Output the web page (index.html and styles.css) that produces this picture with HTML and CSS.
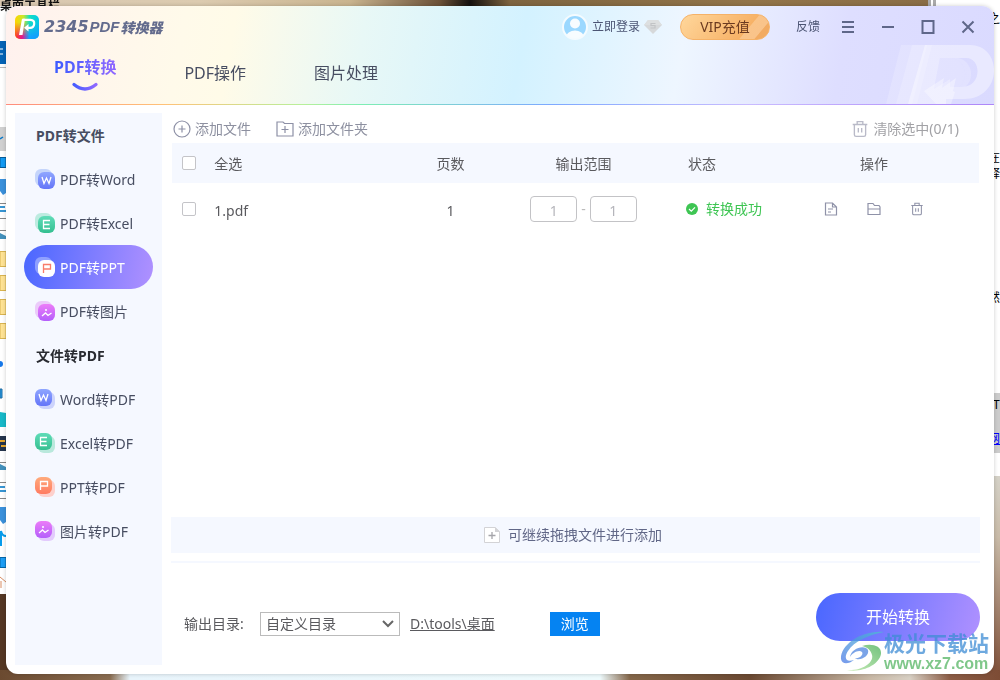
FILE: index.html
```html
<!DOCTYPE html>
<html lang="zh-CN">
<head>
<meta charset="utf-8">
<title>2345PDF转换器</title>
<link rel="stylesheet" href="styles.css">
</head>
<body>
<svg class="defs" width="0" height="0" aria-hidden="true">
  <defs>
    <linearGradient id="gBlue" x1="0" y1="0" x2="0" y2="1"><stop offset="0" stop-color="#8fa6ff"/><stop offset="1" stop-color="#6475f8"/></linearGradient>
    <linearGradient id="gGreen" x1="0" y1="0" x2="0" y2="1"><stop offset="0" stop-color="#5fdcb8"/><stop offset="1" stop-color="#35bf90"/></linearGradient>
    <linearGradient id="gOrange" x1="0" y1="0" x2="0" y2="1"><stop offset="0" stop-color="#ffab7c"/><stop offset="1" stop-color="#ff7b61"/></linearGradient>
    <linearGradient id="gPink" x1="0" y1="0" x2="0" y2="1"><stop offset="0" stop-color="#ec7cf8"/><stop offset="1" stop-color="#b45ffb"/></linearGradient>
    <symbol id="letterW" viewBox="0 0 17 17"><path d="M4 5l2 6.5L8.500 6 11 11.500 13 5" fill="none" stroke="currentColor" stroke-width="1.300"/></symbol>
    <symbol id="letterE" viewBox="0 0 17 17"><path d="M12 4.500H5.500v8H12M5.500 8.500H11.500" fill="none" stroke="currentColor" stroke-width="1.300"/></symbol>
    <symbol id="letterP" viewBox="0 0 17 17"><path d="M5.500 13V4.500H12.500V9H5.500" fill="none" stroke="currentColor" stroke-width="1.300"/></symbol>
    <symbol id="picMark" viewBox="0 0 17 17"><path d="M4 12l3.500-3 2.500 2.500L13.500 9" fill="none" stroke="currentColor" stroke-width="1.300"/><circle cx="8" cy="6" r="1" fill="currentColor"/></symbol>
    <symbol id="trash" viewBox="0 0 16 16"><path d="M1.500 4h13M5.500 4V1.500h5V4M3 4v9q0 1.500 1.500 1.500h7Q13 14.500 13 13V4M6.500 7v4M9.500 7v4" fill="none" stroke="currentColor" stroke-width="1.200"/></symbol>
  </defs>
</svg>

<div class="desktop" aria-hidden="true">
  <div class="sky"></div>
  <div class="left-strip">
    <svg width="6" height="594" viewBox="0 0 6 594">
      <path d="M0 41h6v23H0z" fill="#0563b5"/><path d="M0 49h3M0 54h3" stroke="#fff"/><path d="M0 67.500h6" stroke="#bbb"/>
      <path d="M0 127h6v24H0z" fill="#d0d0d0"/><path d="M0 139l3-2" stroke="#0878c8" stroke-width="1.500"/>
      <path d="M0 157.500h6v10H0z" fill="#149cf4" stroke="#075c98"/>
      <path d="M0 179h6v14l-3 2-3-4zM0 507h6v15l-3 2-3-4z" fill="#3b91db"/>
      <path d="M0 203.500h6M0 218.500h6M0 230.500h6M0 462.500h6M0 482.500h6M0 498.500h6" stroke="#888"/>
      <path d="M0 207h5M0 211h6M0 487h5M0 491h6" stroke="#3895d2" stroke-width="2"/><path d="M0 233l6 3v3H0zM0 464l6 3v3H0z" fill="#4390bb"/>
      <path d="M0 251.500h6v15H0zM0 275.500h6v15H0zM0 299.500h6v15H0zM0 323.500h6v15H0z" fill="#ffe394" stroke="#d9b450"/>
      <circle cx="0" cy="364" r="3" fill="#1677e8"/><path d="M0 389h2v9H0z" fill="#22a0ee" stroke="#246da0"/><path d="M0 412l6 1v14H0z" fill="#18b9c8"/>
      <path d="M0 436h6v15H0z" fill="#25354c"/><path d="M0 441h5M1 446h5" stroke="#e4a52b" stroke-width="2"/>
      <path d="M1 546v-15q1 5 5 5M1 541l-2 5" fill="none" stroke="#079ceb" stroke-width="2"/>
      <path d="M0 557.500h6v10H0z" fill="#1e9ff5" stroke="#0567a8"/><path d="M0 577l6 5M1 581v7" stroke="#d78c62"/>
    </svg>
  </div>
  <div class="right-strip">
    <span class="bit bit-a">之</span><span class="bit bit-b">在</span><span class="bit bit-c">释</span><span class="bit bit-d">然</span>
    <div class="right-bar"><span>HT</span><u>网</u></div>
  </div>
  <div class="top-text">桌面工具栏</div>
</div>

<div class="window">
  <header class="header">
    <svg class="header-mark" width="110" height="59" viewBox="0 0 110 59">
      <g fill="#fff">
        <path opacity=".18" d="M17 0h26L28 59H2z"/><path opacity=".18" d="M28 0h20L33 59H12z"/>
        <path opacity=".4" fill-rule="evenodd" d="M41 0h45c33 0 33 54-6 54H62v5H24zM56 13l-6 31 16-10v8h12c20 0 20-29 4-29z"/>
        <path opacity=".2" d="M56 13h12c15 3 17 22 7 29h-9v-8l-16 10z"/><path opacity=".2" d="M68 13h6c15 3 17 22 7 29h-6c10-7 8-26-7-29z"/>
        <path opacity=".35" d="M40 46l20-13-2 10 14-10-3 13 2 1-4 12H52z"/>
      </g>
    </svg>
    <div class="titlebar">
      <div class="brand">
        <svg width="24" height="24" viewBox="0 0 24 24">
          <defs><linearGradient id="lg1" x1="0" y1="0" x2="1" y2="0"><stop offset="0" stop-color="#ffd400"/><stop offset=".35" stop-color="#c9e72b"/><stop offset=".6" stop-color="#16dfc0"/><stop offset="1" stop-color="#00c8e8"/></linearGradient>
          <linearGradient id="lg2" x1="0" y1="0" x2="1" y2="0"><stop offset="0" stop-color="#ff3c20"/><stop offset=".3" stop-color="#e4178f"/><stop offset=".6" stop-color="#10a5ff"/><stop offset="1" stop-color="#149bfb"/></linearGradient>
          <linearGradient id="lgm" x1="0" y1="0" x2="0" y2="1"><stop offset=".3" stop-color="#fff" stop-opacity="0"/><stop offset=".9" stop-color="#fff"/></linearGradient><mask id="mk"><rect width="24" height="24" fill="url(#lgm)"/></mask></defs>
          <rect width="24" height="24" rx="5" fill="url(#lg1)"/><rect width="24" height="24" rx="5" fill="url(#lg2)" mask="url(#mk)"/>
          <path d="M8 4.800h7.500c5.500 0 4.500 8-.5 8h-2" fill="none" stroke="#fff" stroke-width="2.200"/><path d="M7 3.700h3L7.500 20H4zM13.500 9v7.600l-4.500-3.800z" fill="#fff"/>
        </svg>
        <span class="brand-name"><b class="brand-num">2345</b><span class="brand-pdf">PDF</span><b class="brand-cn">转换器</b></span>
      </div>
      <div class="tools">
        <button class="login">
          <svg width="26" height="26" viewBox="0 0 26 26"><defs><clipPath id="av"><circle cx="13" cy="13" r="12"/></clipPath></defs><circle cx="13" cy="13" r="12" fill="#9bd8ff"/><g fill="#f7fcff" clip-path="url(#av)"><circle cx="13" cy="9.500" r="5"/><path d="M3 27c0-14 20-14 20 0z"/></g><circle cx="13" cy="13" r="12" fill="none" stroke="#f4fbff" stroke-width="2"/></svg>
          <span>立即登录</span>
          <svg width="18" height="14" viewBox="0 0 18 14"><path d="M4 0h10l4 5-9 9-9-9z" fill="#d6d8da"/><path d="M4 0h10l4 5H0z" fill="#dddfe0"/><path d="M11.500 3.500H7v2h4v2.500H6.500" fill="none" stroke="#c2c4c6" stroke-width="1.200"/></svg>
        </button>
        <button class="vip">VIP充值</button>
        <button class="feedback">反馈</button>
        <button class="win-btn" aria-label="菜单"><svg width="14" height="14" viewBox="0 0 14 14"><path d="M1 2h12M1 7h12M1 12h12"/></svg></button>
        <button class="win-btn" aria-label="最小化"><svg width="14" height="14" viewBox="0 0 14 14"><path d="M1 7h12"/></svg></button>
        <button class="win-btn" aria-label="最大化"><svg width="14" height="14" viewBox="0 0 14 14"><path d="M1.500 1h11v12h-11z"/></svg></button>
        <button class="win-btn" aria-label="关闭"><svg width="14" height="14" viewBox="0 0 14 14"><path d="M1.500 1.500l11 11M12.500 1.500l-11 11"/></svg></button>
      </div>
    </div>
    <nav class="tabs">
      <a class="tab active" href="#"><span>PDF转换</span><svg width="26" height="9" viewBox="0 0 26 9"><defs><linearGradient id="arc"><stop offset="0" stop-color="#465cff"/><stop offset="1" stop-color="#9068ff"/></linearGradient></defs><path d="M2 2.500q11 9 22 0" fill="none" stroke="url(#arc)" stroke-width="3.200" stroke-linecap="round"/></svg></a>
      <a class="tab" href="#">PDF操作</a>
      <a class="tab" href="#">图片处理</a>
    </nav>
  </header>

  <div class="content">
    <aside class="sidebar">
      <h2>PDF转文件</h2>
      <a class="item" href="#"><svg width="20" height="20"><rect width="17" height="17" rx="6" fill="#c5d5fb"/><rect x="3" y="3" width="17" height="17" rx="6" fill="url(#gBlue)"/><use href="#letterW" x="3" y="3" width="17" height="17"/></svg><span>PDF转Word</span></a>
      <a class="item" href="#"><svg width="20" height="20"><rect width="17" height="17" rx="6" fill="#bdebe0"/><rect x="3" y="3" width="17" height="17" rx="6" fill="url(#gGreen)"/><use href="#letterE" x="3" y="3" width="17" height="17"/></svg><span>PDF转Excel</span></a>
      <a class="item selected" href="#"><svg width="20" height="20"><rect width="17" height="17" rx="6" fill="#8fa0ff"/><rect x="3" y="3" width="17" height="17" rx="6" fill="#fff"/><use class="coral" href="#letterP" x="3" y="3" width="17" height="17"/></svg><span>PDF转PPT</span></a>
      <a class="item" href="#"><svg width="20" height="20"><rect width="17" height="17" rx="6" fill="#ebcbfa"/><rect x="3" y="3" width="17" height="17" rx="6" fill="url(#gPink)"/><use href="#picMark" x="3" y="3" width="17" height="17"/></svg><span>PDF转图片</span></a>
      <h2 class="dark">文件转PDF</h2>
      <a class="item" href="#"><svg width="20" height="20"><rect x="3" y="3" width="17" height="17" rx="6" fill="#ccd3fc"/><rect width="17" height="17" rx="6" fill="url(#gBlue)"/><use href="#letterW" width="17" height="17"/></svg><span>Word转PDF</span></a>
      <a class="item" href="#"><svg width="20" height="20"><rect x="3" y="3" width="17" height="17" rx="6" fill="#b9e8dc"/><rect width="17" height="17" rx="6" fill="url(#gGreen)"/><use href="#letterE" width="17" height="17"/></svg><span>Excel转PDF</span></a>
      <a class="item" href="#"><svg width="20" height="20"><rect x="3" y="3" width="17" height="17" rx="6" fill="#fdd0cc"/><rect width="17" height="17" rx="6" fill="url(#gOrange)"/><use href="#letterP" width="17" height="17"/></svg><span>PPT转PDF</span></a>
      <a class="item" href="#"><svg width="20" height="20"><rect x="3" y="3" width="17" height="17" rx="6" fill="#e3cbfd"/><rect width="17" height="17" rx="6" fill="url(#gPink)"/><use href="#picMark" width="17" height="17"/></svg><span>图片转PDF</span></a>
    </aside>

    <main class="main">
      <div class="toolbar">
        <button><svg width="18" height="18" viewBox="0 0 18 18"><circle cx="9" cy="9" r="8"/><path d="M5.500 9h7M9 5.500v7"/></svg>添加文件</button>
        <button><svg width="18" height="18" viewBox="0 0 18 18"><path d="M1 16V2h6l1.500 1.500H17V16zM5.500 9.500h7M9 6v7"/></svg>添加文件夹</button>
        <button class="clear"><svg width="18" height="18"><use href="#trash" width="18" height="18"/></svg>清除选中(0/1)</button>
      </div>
      <div class="files">
        <table>
          <colgroup><col class="c-check"><col class="c-name"><col class="c-pages"><col class="c-range"><col class="c-state"><col class="c-ops"></colgroup>
          <thead><tr>
            <th class="check"><input type="checkbox" id="all"></th>
            <th class="left"><label for="all">全选</label></th>
            <th>页数</th><th>输出范围</th><th class="left state-head">状态</th><th>操作</th>
          </tr></thead>
          <tbody><tr>
            <td class="check"><input type="checkbox" aria-label="1.pdf"></td>
            <td class="left text">1.pdf</td>
            <td class="text">1</td>
            <td><div class="range"><input type="text" value="1" aria-label="起始页"><span>-</span><input type="text" value="1" aria-label="结束页"></div></td>
            <td><div class="state"><svg width="12" height="12" viewBox="0 0 12 12"><circle cx="6" cy="6" r="6" fill="#3ec553"/><path d="M3 6l2.300 2.200L9 4.300" fill="none" stroke="#fff" stroke-width="1.200"/></svg>转换成功</div></td>
            <td><div class="ops">
              <button aria-label="打开文件"><svg width="14" height="14" viewBox="0 0 14 14"><path d="M1.500 1h7L12.500 5v8h-11zM8.500 1v4h4M4 7h5M4 10h3"/></svg></button>
              <button aria-label="打开文件夹"><svg width="14" height="14" viewBox="0 0 14 14"><path d="M1 12.500v-11h5l1.500 2H12l1 1.500v7.500zM1 7h12"/></svg></button>
              <button aria-label="删除"><svg width="14" height="14"><use href="#trash" width="14" height="14"/></svg></button>
            </div></td>
          </tr></tbody>
        </table>
      </div>
      <div class="drop">
        <svg width="16" height="16" viewBox="0 0 16 16"><path d="M.5.500h10.500l4.500 4v11H.5z" fill="#fff" stroke="#d3d3d6"/><path d="M11 0l5 5h-5z" fill="#d3d3d6"/><path d="M4.500 8.500h7M8 5v7" stroke="#a5a5aa" stroke-width="1.300"/></svg>
        可继续拖拽文件进行添加
      </div>
      <footer class="footer">
        <div class="output">
          <label for="dir">输出目录:</label>
          <div class="select"><select id="dir"><option>自定义目录</option></select><svg width="12" height="8" viewBox="0 0 12 8"><path d="M1 1l5 5 5-5" fill="none" stroke="#666" stroke-width="2"/></svg></div>
          <a href="#">D:\tools\桌面</a>
          <button class="browse">浏览</button>
        </div>
        <button class="start">开始转换</button>
      </footer>
    </main>
  </div>
</div>

<div class="stamp">
  <svg width="44" height="42" viewBox="0 0 44 42">
    <defs><linearGradient id="sw1" x1="0" y1="1" x2="1" y2="0"><stop offset="0" stop-color="#4a78e6"/><stop offset="1" stop-color="#4fc1d0"/></linearGradient><linearGradient id="sw2" x1="0" y1="1" x2="1" y2="0"><stop offset="0" stop-color="#b8e6a0"/><stop offset="1" stop-color="#45ae55"/></linearGradient></defs>
    <path d="M44 1C20-1 0 15 1 28c1 6 8 5 13 1-9 3-10-3-6-9C14 10 29 4 44 1z" fill="url(#sw1)"/>
    <path d="M22 15c10-3 20 0 19 8-2 11-19 19-34 16 16 1 27-8 25-15-1-5-5-8-10-9z" fill="url(#sw2)"/>
    <path d="M10 26c1-9 15-13 18-7 2 6-9 12-13 8 4 1 9-3 7-6-3-3-10 1-12 5z" fill="#4f86e0"/>
  </svg>
  <div class="stamp-text"><b>极光下载站</b><span>www.xz7.com</span></div>
</div>
</body>
</html>
```

FILE: styles.css
```css
* { box-sizing: border-box; }

body {
  margin: 0;
  height: 100vh;
  padding: 6px;
  overflow: hidden;
  font: 14px/20px "Noto Sans", "Noto Sans CJK SC", sans-serif;
  color: #5a5a5e;
}

button, input, select { font: inherit; color: inherit; }
button { padding: 0; border: 0; background: none; }
a { color: inherit; text-decoration: none; }
svg { display: block; flex: none; }
.defs { position: absolute; }

/* Desktop behind the window */
.desktop { position: fixed; inset: 0; z-index: -1; background: #fff; }
.sky {
  position: absolute;
  inset: 0;
  background:
    linear-gradient(90deg, #d8c7b0, #dccbb0 20%, #c9b48f 35%, #6b5138 44%, #15110f 47%, #7e6440 51%, #927449 75%, #866a44) top / 100% 6px no-repeat,
    linear-gradient(90deg, #6b4a30, #896c50 11%, #e8f4fb 13%, #eefafc 60%, #846649 63%, #6b4932 75%, #c8b8a5 87%, #d8d0c4 91%, #8c5d46 95%, #7d4c35) bottom / 100% 10px no-repeat,
    linear-gradient(90deg, #543723 50%, transparent 50%) bottom / 100% 86px no-repeat,
    linear-gradient(#d5d2c8, #c9bba8 30%, #7d4c35) bottom / 100% 204px no-repeat;
}
.left-strip { position: absolute; left: 0; top: 6px; width: 6px; height: 588px; overflow: hidden; background: #fff; }
.left-strip svg { margin-top: -6px; }
.right-strip {
  position: absolute;
  right: 0;
  top: 0;
  width: 72px;
  height: 476px;
  border-left: 8px double #aaa;
  background: #fff;
  font: 12px/14px "Noto Sans CJK SC", sans-serif;
  color: #000;
}
.bit { position: absolute; right: 0; }
.bit-a { top: 11px; }
.bit-b { top: 150px; }
.bit-c { top: 166px; }
.bit-d { top: 290px; }
.right-bar { position: absolute; right: 0; top: 393px; width: 16px; height: 60px; background: #ccc; text-align: right; }
.right-bar span, .right-bar u { display: block; padding: 4px 0 16px; }
.right-bar u { color: #00f; }
.top-text { position: absolute; left: 0; top: -2px; font: bold 12px/14px "Noto Sans CJK SC", sans-serif; color: #111; }

/* Window */
.window {
  display: flex;
  flex-direction: column;
  height: 100%;
  overflow: hidden;
  border-radius: 12px;
  background: #fff;
  box-shadow: 0 0 4px rgba(0, 0, 0, .2);
}
.header {
  position: relative;
  padding: 8px 19px 0 9px;
  height: 99px;
  background:
    linear-gradient(90deg, #ff8c7c, #ffc278 16%, #b8f09a 30%, #7eeeb4 36%, #7da9ff 55%, #c9bcff 75%, #ad86f8) bottom / 100% 1px no-repeat,
    linear-gradient(100deg, #fff1ee, #fffaea 18%, #fffbe8 23%, #e8f8f6 36%, #d3f2ff 52%, #eef6ff 68%, #dedeff 84%, #dadaff);
}
.header-mark { position: absolute; right: 0; bottom: 1px; }
.titlebar { display: flex; justify-content: space-between; align-items: center; height: 26px; }
.brand { display: flex; align-items: center; gap: 5px; }
.brand-name { display: flex; align-items: center; gap: 1px; font-style: italic; color: #636b8d; }
.brand-num { font: italic bold 16px/20px "DejaVu Sans", sans-serif; }
.brand-pdf { font: italic bold 15px/20px "Liberation Sans", sans-serif; }
.brand-cn { font-family: "Noto Sans CJK SC", sans-serif; font-weight: 900; font-size: 14px; }
.tools { display: flex; align-items: center; font-size: 12px; color: #4c5574; }
.login { display: flex; align-items: center; gap: 4px; }
.vip {
  width: 90px;
  height: 26px;
  margin: 0 26px 0 18px;
  border: 1px solid #f5b268;
  border-radius: 13px;
  background: linear-gradient(130deg, #ffd79c, #f7b267 72%, #fac489 73%, #f9c38a 86%, #f2ab62 87%);
  font-size: 14px;
  color: #6b3a20;
}
.feedback { margin-right: 1px; }
.win-btn { display: flex; justify-content: center; width: 14px; margin-left: 26px; }
.feedback + .win-btn { margin-left: 20px; }
.win-btn path { fill: none; stroke: #5f6789; stroke-width: 2; }
.tabs { display: flex; align-items: flex-start; gap: 68px; padding: 17px 0 0 39px; font-size: 16px; color: #474d61; }
.tab { padding-top: 6px; }
.tab.active { display: flex; flex-direction: column; align-items: center; gap: 5px; padding: 0; font-weight: 700; }
.tab.active span { background: linear-gradient(90deg, #3b5bff, #9068ff); background-clip: text; color: transparent; }

.content { flex: 1; display: flex; gap: 9px; min-height: 0; padding: 8px 14px 0 9px; }
.sidebar { width: 147px; margin-bottom: 9px; padding: 0 9px; background: #f5f8ff; color: #474d61; }
.sidebar h2 { height: 44px; margin: 0; padding: 2px 0 0 12px; font-size: 14px; line-height: 42px; color: #474d61; }
.sidebar .dark { color: #292b31; }
.item { display: flex; align-items: center; gap: 5px; height: 44px; padding-left: 11px; border-radius: 22px; white-space: nowrap; }
.item svg { color: #fff; }
.item span { padding-top: 2px; }
.item.selected { background: linear-gradient(100deg, #4967ff, #b091ff); color: #fff; }
.item .coral { color: #f97c6a; }

.main { flex: 1; display: flex; flex-direction: column; min-width: 0; }
.toolbar { display: flex; align-items: center; gap: 25px; height: 30px; padding: 2px 21px 0 2px; color: #8d90a0; }
.toolbar button { display: flex; align-items: center; gap: 4px; }
.toolbar svg { fill: none; stroke: #8d90a6; stroke-width: 1.2; color: #b9bac8; }
.toolbar .clear { margin-left: auto; color: #a2a2a6; }
.toolbar .clear svg { stroke: none; }
.files { flex: 1; padding: 0 1px; }
table { width: 100%; table-layout: fixed; border-collapse: collapse; }
.c-check { width: 5%; }
.c-name { width: 21%; }
.c-pages { width: 17%; }
.c-range { width: 16%; }
.c-state { width: 15%; }
.c-ops { width: 26%; }
th, td { height: 40px; padding: 0; text-align: center; font-weight: 400; }
th { padding-top: 1px; background: #f5f8ff; }
td { height: 52px; }
.text { padding-top: 3px; }
.left { padding-left: 2px; text-align: left; }
th.state-head { padding-left: 40px; }
.check { padding: 0 0 0 10px; text-align: left; }
.check input { display: block; appearance: none; width: 14px; height: 14px; margin: 0; border: 1px solid #c4c4c8; border-radius: 2px; background: #fff; }
.range { display: flex; justify-content: center; align-items: center; gap: 4px; color: #bbb; }
.range input { width: 47px; height: 26px; padding: 3px 0 0; border: 1px solid #c3c3c6; border-radius: 4px; background: #fff; text-align: center; color: #b5b5bb; }
.state { display: flex; align-items: center; gap: 8px; padding-left: 38px; color: #3ec553; white-space: nowrap; }
.ops { display: flex; justify-content: center; gap: 29px; }
.ops svg { fill: none; stroke: #8f92a8; stroke-width: 1.2; color: #8f92a8; }
.drop { display: flex; justify-content: center; align-items: center; gap: 8px; height: 36px; margin-bottom: 8px; padding-right: 5px; background: #f5f8ff; color: #616787; }
.footer { display: flex; justify-content: space-between; align-items: flex-start; padding: 30px 0 33px 13px; border-top: 2px solid #f5f8ff; }
.output { display: flex; align-items: center; gap: 10px; padding-top: 19px; }
.output label { width: 66px; white-space: nowrap; }
.select { position: relative; width: 140px; height: 24px; }
.select select { appearance: none; width: 100%; height: 100%; padding: 0 24px 0 5px; border: 1px solid #bbb; border-radius: 0; background: #fff; }
.select svg { position: absolute; right: 6px; top: 8px; pointer-events: none; }
.output a { text-decoration: underline; }
.browse { width: 50px; height: 24px; margin-left: 45px; background: #0583f2; color: #fff; }
.start { width: 164px; height: 48px; border-radius: 24px; background: linear-gradient(105deg, #4967ff, #b091ff); font-size: 16px; color: #fff; }

/* Site stamp over the corner of the window */
.stamp { position: fixed; right: 11px; bottom: 7px; display: flex; align-items: center; opacity: .75; pointer-events: none; }
.stamp-text { display: flex; flex-direction: column; }
.stamp-text b { font-size: 21px; line-height: 24px; color: #3e8cd5; }
.stamp-text span { font: bold 16px/18px "Liberation Sans", sans-serif; color: #55b563; }
```
